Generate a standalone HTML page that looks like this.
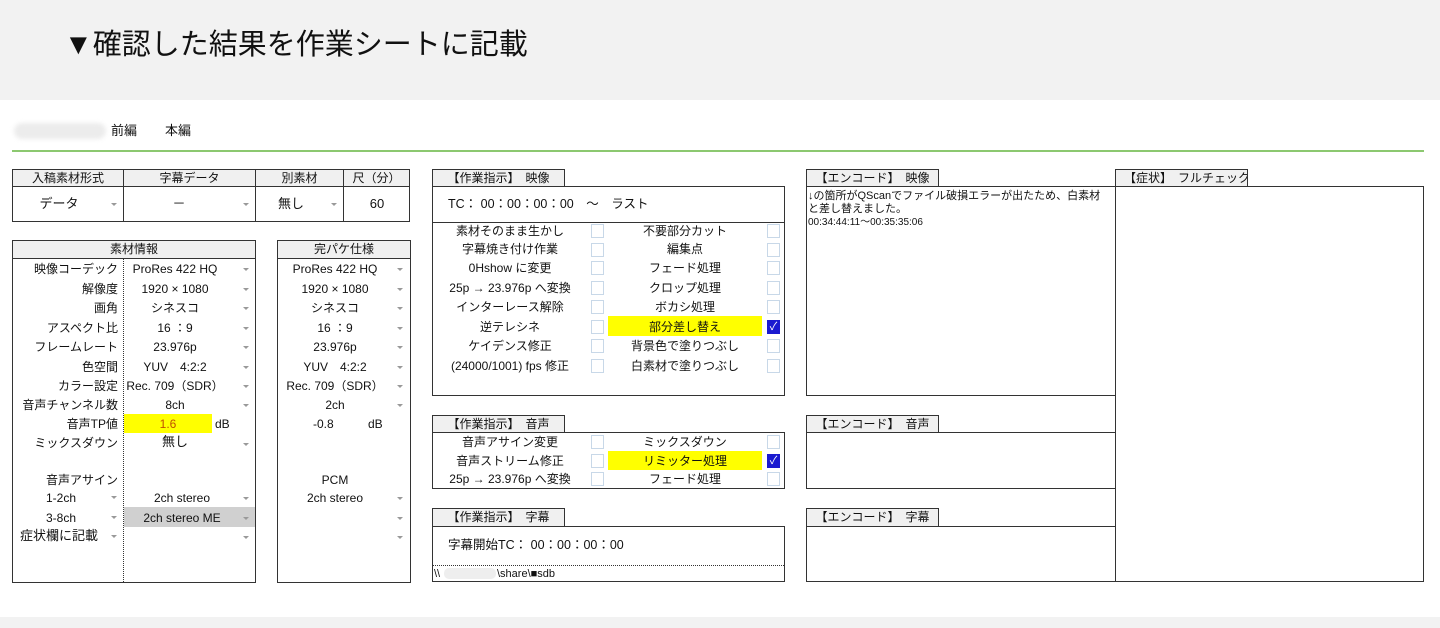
<!DOCTYPE html>
<html><head><meta charset="utf-8"><style>
*{margin:0;padding:0;box-sizing:border-box}
body{width:1440px;height:628px;position:relative;background:#fff;font-family:"Liberation Sans","Noto Sans CJK JP",sans-serif;color:#111;overflow:hidden;font-size:12px}
div{position:absolute}
.b{border:1px solid #333}
.h{background:#f0f0f0;border:1px solid #333;text-align:center;line-height:16px;font-size:12px;white-space:nowrap;overflow:hidden}
.c{text-align:center;line-height:16px;white-space:nowrap}
.r{text-align:right;line-height:16px;white-space:nowrap}
.l{line-height:16px;white-space:nowrap}
.a{width:0;height:0;border-left:3px solid transparent;border-right:3px solid transparent;border-top:3px solid #999}
.cb{width:13px;height:14px;border:1px solid #c8d8e8;background:#fff}
.ck{width:13px;height:14px;background:#1a1ad0;color:#fff;font-size:11px;line-height:14px;text-align:center}
.y{background:#ffff00}
</style></head><body>
<div style="left:0;top:0;width:1440px;height:100px;background:#f2f2f2"></div>
<div class="l" style="left:64px;top:27px;font-size:29px;line-height:36px;color:#111">▼確認した結果を作業シートに記載</div>
<div style="left:0;top:617px;width:1440px;height:11px;background:#f2f2f2"></div>

<div style="left:14px;top:123px;width:92px;height:16px;background:#ececec;border-radius:8px;filter:blur(2px)"></div>
<div class="l" style="left:111px;top:123px;font-size:13px">前編</div>
<div class="l" style="left:165px;top:123px;font-size:13px">本編</div>
<div style="left:12px;top:150px;width:1412px;height:2px;background:#8cc870"></div>

<div class="b" style="left:12px;top:169px;width:398px;height:53px"></div>
<div class="h" style="left:12px;top:169px;width:112px;height:18px">入稿素材形式</div>
<div class="h" style="left:123px;top:169px;width:133px;height:18px">字幕データ</div>
<div class="h" style="left:255px;top:169px;width:89px;height:18px">別素材</div>
<div class="h" style="left:343px;top:169px;width:67px;height:18px">尺（分）</div>
<div style="left:123px;top:186px;width:1px;height:36px;background:#333"></div>
<div style="left:255px;top:186px;width:1px;height:36px;background:#333"></div>
<div style="left:343px;top:186px;width:1px;height:36px;background:#333"></div>
<div class="c" style="left:12px;top:196px;width:94px;font-size:13px">データ</div><div class="a" style="left:111px;top:203px"></div>
<div class="c" style="left:124px;top:196px;width:110px;font-size:13px">－</div><div class="a" style="left:243px;top:203px"></div>
<div class="c" style="left:256px;top:196px;width:70px;font-size:13px">無し</div><div class="a" style="left:331px;top:203px"></div>
<div class="c" style="left:344px;top:196px;width:66px;font-size:13px">60</div>

<div class="b" style="left:12px;top:240px;width:244px;height:343px"></div>
<div class="h" style="left:12px;top:240px;width:244px;height:19px">素材情報</div>
<div style="left:123px;top:259px;width:0;height:323px;border-left:1px dotted #333"></div>
<div class="y" style="left:124px;top:414px;width:88px;height:19px"></div>
<div style="left:124px;top:507px;width:131px;height:20px;background:#d0d0d0"></div>
<div class="b" style="left:277px;top:240px;width:134px;height:343px"></div>
<div class="h" style="left:277px;top:240px;width:134px;height:19px">完パケ仕様</div>

<div class="r" style="left:14px;top:261px;width:104px">映像コーデック</div>
<div class="r" style="left:14px;top:281px;width:104px">解像度</div>
<div class="r" style="left:14px;top:300px;width:104px">画角</div>
<div class="r" style="left:14px;top:320px;width:104px">アスペクト比</div>
<div class="r" style="left:14px;top:339px;width:104px">フレームレート</div>
<div class="r" style="left:14px;top:359px;width:104px">色空間</div>
<div class="r" style="left:14px;top:378px;width:104px">カラー設定</div>
<div class="r" style="left:14px;top:397px;width:104px">音声チャンネル数</div>
<div class="r" style="left:14px;top:416px;width:104px">音声TP値</div>
<div class="r" style="left:14px;top:435px;width:104px">ミックスダウン</div>
<div class="r" style="left:14px;top:472px;width:104px">音声アサイン</div>
<div class="l" style="left:46px;top:490px">1-2ch</div><div class="a" style="left:111px;top:496px"></div>
<div class="l" style="left:46px;top:510px">3-8ch</div><div class="a" style="left:111px;top:516px"></div>
<div class="l" style="left:20px;top:528px;font-size:13px">症状欄に記載</div><div class="a" style="left:111px;top:535px"></div>

<div class="c" style="left:124px;top:261px;width:102px">ProRes 422 HQ</div>
<div class="c" style="left:124px;top:281px;width:102px">1920 × 1080</div>
<div class="c" style="left:124px;top:300px;width:102px">シネスコ</div>
<div class="c" style="left:124px;top:320px;width:102px">16 ：9</div>
<div class="c" style="left:124px;top:339px;width:102px">23.976p</div>
<div class="c" style="left:124px;top:359px;width:102px">YUV　4:2:2</div>
<div class="c" style="left:124px;top:378px;width:102px">Rec. 709（SDR）</div>
<div class="c" style="left:124px;top:397px;width:102px">8ch</div>
<div class="c" style="left:124px;top:416px;width:88px;color:#c05000">1.6</div>
<div class="l" style="left:215px;top:416px">dB</div>
<div class="c" style="left:124px;top:434px;width:102px;font-size:13px">無し</div>
<div class="c" style="left:124px;top:490px;width:116px">2ch stereo</div>
<div class="c" style="left:124px;top:510px;width:116px">2ch stereo ME</div>
<div class="a" style="left:243px;top:268px"></div><div class="a" style="left:243px;top:288px"></div><div class="a" style="left:243px;top:307px"></div><div class="a" style="left:243px;top:327px"></div><div class="a" style="left:243px;top:346px"></div><div class="a" style="left:243px;top:366px"></div><div class="a" style="left:243px;top:385px"></div><div class="a" style="left:243px;top:404px"></div><div class="a" style="left:243px;top:443px"></div><div class="a" style="left:243px;top:497px"></div><div class="a" style="left:243px;top:517px"></div><div class="a" style="left:243px;top:536px"></div>

<div class="c" style="left:280px;top:261px;width:110px">ProRes 422 HQ</div>
<div class="c" style="left:280px;top:281px;width:110px">1920 × 1080</div>
<div class="c" style="left:280px;top:300px;width:110px">シネスコ</div>
<div class="c" style="left:280px;top:320px;width:110px">16 ：9</div>
<div class="c" style="left:280px;top:339px;width:110px">23.976p</div>
<div class="c" style="left:280px;top:359px;width:110px">YUV　4:2:2</div>
<div class="c" style="left:280px;top:378px;width:110px">Rec. 709（SDR）</div>
<div class="c" style="left:280px;top:397px;width:110px">2ch</div>
<div class="l" style="left:313px;top:416px">-0.8</div><div class="l" style="left:368px;top:416px">dB</div>
<div class="c" style="left:280px;top:472px;width:110px">PCM</div>
<div class="c" style="left:280px;top:490px;width:110px">2ch stereo</div>
<div class="a" style="left:397px;top:268px"></div><div class="a" style="left:397px;top:288px"></div><div class="a" style="left:397px;top:307px"></div><div class="a" style="left:397px;top:327px"></div><div class="a" style="left:397px;top:346px"></div><div class="a" style="left:397px;top:366px"></div><div class="a" style="left:397px;top:385px"></div><div class="a" style="left:397px;top:404px"></div><div class="a" style="left:397px;top:497px"></div><div class="a" style="left:397px;top:517px"></div><div class="a" style="left:397px;top:536px"></div>

<div class="h" style="left:432px;top:169px;width:133px;height:18px">【作業指示】　映像</div>
<div class="b" style="left:432px;top:186px;width:353px;height:210px"></div>
<div class="l" style="left:448px;top:196px;font-size:12.5px">TC：&nbsp;00：00：00：00　～　ラスト</div>
<div style="left:432px;top:222px;width:353px;height:1px;background:#333"></div>
<div class="y" style="left:608px;top:316px;width:154px;height:20px"></div>
<div class="y" style="left:608px;top:451px;width:154px;height:19px"></div>

<div class="c" style="left:440px;top:223px;width:140px">素材そのまま生かし</div>
<div class="c" style="left:440px;top:241px;width:140px">字幕焼き付け作業</div>
<div class="c" style="left:440px;top:260px;width:140px">0Hshow に変更</div>
<div class="c" style="left:440px;top:280px;width:140px">25p → 23.976p へ変換</div>
<div class="c" style="left:440px;top:299px;width:140px">インターレース解除</div>
<div class="c" style="left:440px;top:319px;width:140px">逆テレシネ</div>
<div class="c" style="left:440px;top:338px;width:140px">ケイデンス修正</div>
<div class="c" style="left:440px;top:358px;width:140px">(24000/1001) fps 修正</div>
<div class="c" style="left:612px;top:223px;width:146px">不要部分カット</div>
<div class="c" style="left:612px;top:241px;width:146px">編集点</div>
<div class="c" style="left:612px;top:260px;width:146px">フェード処理</div>
<div class="c" style="left:612px;top:280px;width:146px">クロップ処理</div>
<div class="c" style="left:612px;top:299px;width:146px">ボカシ処理</div>
<div class="c" style="left:612px;top:319px;width:146px">部分差し替え</div>
<div class="c" style="left:612px;top:338px;width:146px">背景色で塗りつぶし</div>
<div class="c" style="left:612px;top:358px;width:146px">白素材で塗りつぶし</div>
<div class="cb" style="left:591px;top:224px"></div><div class="cb" style="left:591px;top:243px"></div><div class="cb" style="left:591px;top:261px"></div><div class="cb" style="left:591px;top:281px"></div><div class="cb" style="left:591px;top:300px"></div><div class="cb" style="left:591px;top:320px"></div><div class="cb" style="left:591px;top:339px"></div><div class="cb" style="left:591px;top:359px"></div>
<div class="cb" style="left:767px;top:224px"></div><div class="cb" style="left:767px;top:243px"></div><div class="cb" style="left:767px;top:261px"></div><div class="cb" style="left:767px;top:281px"></div><div class="cb" style="left:767px;top:300px"></div><div class="ck" style="left:767px;top:320px">✓</div><div class="cb" style="left:767px;top:339px"></div><div class="cb" style="left:767px;top:359px"></div>

<div class="h" style="left:432px;top:415px;width:133px;height:18px">【作業指示】　音声</div>
<div class="b" style="left:432px;top:432px;width:353px;height:57px"></div>
<div class="c" style="left:440px;top:434px;width:140px">音声アサイン変更</div>
<div class="c" style="left:440px;top:453px;width:140px">音声ストリーム修正</div>
<div class="c" style="left:440px;top:471px;width:140px">25p → 23.976p へ変換</div>
<div class="c" style="left:612px;top:434px;width:146px">ミックスダウン</div>
<div class="c" style="left:612px;top:453px;width:146px">リミッター処理</div>
<div class="c" style="left:612px;top:471px;width:146px">フェード処理</div>
<div class="cb" style="left:591px;top:435px"></div><div class="cb" style="left:591px;top:454px"></div><div class="cb" style="left:591px;top:472px"></div>
<div class="cb" style="left:767px;top:435px"></div><div class="ck" style="left:767px;top:454px">✓</div><div class="cb" style="left:767px;top:472px"></div>

<div class="h" style="left:432px;top:508px;width:133px;height:19px">【作業指示】　字幕</div>
<div class="b" style="left:432px;top:526px;width:353px;height:56px"></div>
<div class="l" style="left:448px;top:537px;font-size:12.5px">字幕開始TC：&nbsp;00：00：00：00</div>
<div style="left:433px;top:565px;width:351px;border-top:1px dotted #333"></div>
<div class="l" style="left:434px;top:566px;font-size:11px">\\</div>
<div style="left:444px;top:568px;width:52px;height:11px;background:#eee;border-radius:5px"></div>
<div class="l" style="left:497px;top:566px;font-size:11px">\share\■sdb</div>

<div class="h" style="left:806px;top:169px;width:133px;height:18px">【エンコード】　映像</div>
<div class="b" style="left:806px;top:186px;width:310px;height:210px"></div>
<div style="left:808px;top:190px;width:306px;font-size:11px;line-height:13px">↓の箇所がQScanでファイル破損エラーが出たため、白素材<br>と差し替えました。<br><span style="font-size:10px">00:34:44:11～00:35:35:06</span></div>
<div class="h" style="left:806px;top:415px;width:133px;height:18px">【エンコード】　音声</div>
<div class="b" style="left:806px;top:432px;width:310px;height:57px"></div>
<div class="h" style="left:806px;top:508px;width:133px;height:19px">【エンコード】　字幕</div>
<div class="b" style="left:806px;top:526px;width:310px;height:56px"></div>
<div class="h" style="left:1115px;top:169px;width:133px;height:18px;text-align:left;padding-left:8px">【症状】　フルチェック</div>
<div class="b" style="left:1115px;top:186px;width:309px;height:396px"></div>
</body></html>
